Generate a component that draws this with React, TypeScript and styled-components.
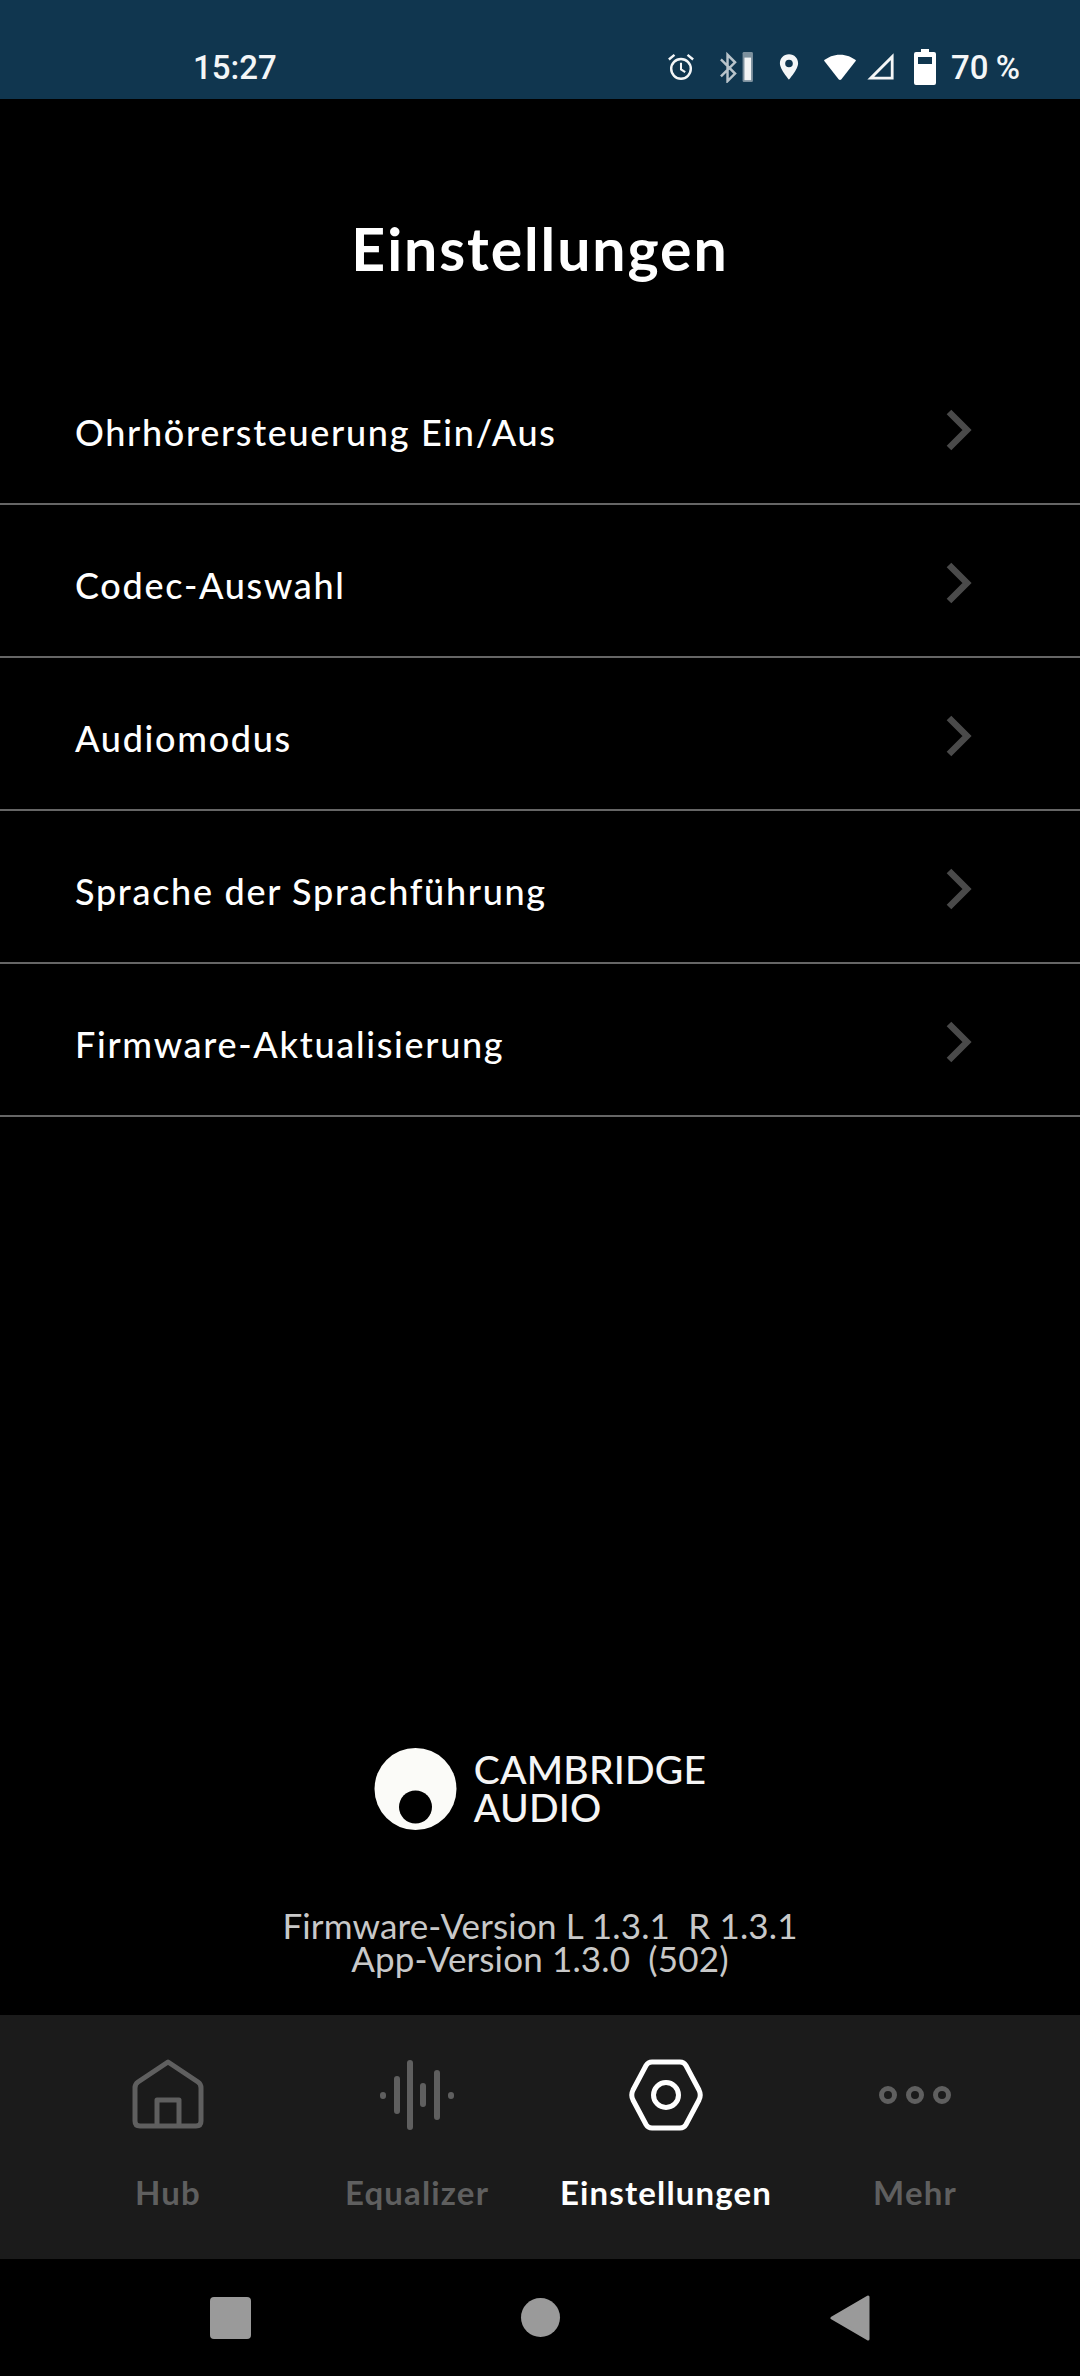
import React from 'react';
import styled, { createGlobalStyle } from 'styled-components';

const GlobalStyle = createGlobalStyle`
  html, body {
    margin: 0;
    padding: 0;
    background: #000;
  }
  * {
    box-sizing: border-box;
  }
`;

const Page = styled.div`
  width: 1080px;
  height: 2376px;
  display: flex;
  flex-direction: column;
  background: #000;
  color: #fff;
  font-family: Lato, 'Open Sans', sans-serif;
  overflow: hidden;
`;

const StatusBar = styled.div`
  height: 99px;
  flex: none;
  background: #10364f;
  display: flex;
  align-items: center;
  padding: 35px 60px 0 193px;
`;

const Clock = styled.span`
  font-family: Roboto, sans-serif;
  font-size: 33px;
  font-weight: 500;
  color: #f4f6f7;
`;

const StatusIcons = styled.div`
  margin-left: auto;
  display: flex;
  align-items: center;
`;

const StatusSlot = styled.span<{ $gap: number }>`
  display: flex;
  margin-left: ${props => props.$gap}px;
`;

const Percent = styled.span`
  font-family: Roboto, sans-serif;
  font-size: 33px;
  font-weight: 500;
  color: #f4f6f7;
  margin-left: 15px;
  word-spacing: -1px;
`;

const Title = styled.h1`
  margin: 0;
  height: 253px;
  flex: none;
  padding-top: 114px;
  text-align: center;
  font-size: 59px;
  line-height: 72px;
  font-weight: 700;
  letter-spacing: 1.9px;
`;

const List = styled.div`
  display: flex;
  flex-direction: column;
`;

const Row = styled.div`
  height: 153px;
  display: flex;
  align-items: center;
  justify-content: space-between;
  padding: 4px 108px 0 75px;
  border-bottom: 2px solid #666;
  font-size: 36px;
  font-weight: 500;
  letter-spacing: 1.7px;
`;

const RowLabel = styled.span`
  padding-top: 4px;
`;

const Brand = styled.div`
  margin-top: auto;
  display: flex;
  align-items: center;
  justify-content: center;
  gap: 17px;
`;

const BrandName = styled.div`
  font-size: 39px;
  line-height: 38px;
  font-weight: 500;
  letter-spacing: 0.2px;
  color: #f5f5f5;
  margin-top: -2px;
`;

const Versions = styled.div`
  margin-top: 79px;
  margin-bottom: 40px;
  text-align: center;
  color: #c8c8c8;
  font-size: 35px;
  line-height: 33px;
  font-weight: 400;
  letter-spacing: 0.15px;
  white-space: pre;
`;

const TabBar = styled.nav`
  height: 244px;
  flex: none;
  background: #1b1b1b;
  display: grid;
  grid-template-columns: repeat(4, 249px);
  justify-content: center;
  padding: 40px 0 0 3px;
`;

const Tab = styled.div<{ $active?: boolean }>`
  display: flex;
  flex-direction: column;
  align-items: center;
  color: ${props => (props.$active ? '#fff' : '#5f5f5f')};
  font-size: 33px;
  line-height: 40px;
  font-weight: 700;
  letter-spacing: 1.15px;
`;

const TabIcon = styled.div`
  height: 80px;
  margin-bottom: 37px;
  display: flex;
  align-items: center;
  justify-content: center;
`;

const NavBar = styled.div`
  height: 117px;
  flex: none;
  display: flex;
  align-items: center;
  justify-content: center;
  gap: 270px;
`;

const NavSquare = styled.div`
  width: 41px;
  height: 42px;
  border-radius: 4px;
  background: #9a9a9a;
`;

const NavCircle = styled.div`
  width: 39px;
  height: 39px;
  border-radius: 50%;
  background: #9a9a9a;
`;

const Chevron = () => (
  <svg width="26" height="42" viewBox="0 0 26 42" fill="none">
    <path d="M3 3 L21 21 L3 39" stroke="#4a4a4a" strokeWidth="6.5" />
  </svg>
);

const AlarmIcon = () => (
  <svg width="28" height="30" viewBox="0 0 30 30" fill="none" stroke="#f4f6f7">
    <circle cx="15" cy="17" r="10.5" strokeWidth="2.6" />
    <path d="M15 10.5 V17.5 L19.5 20.5" strokeWidth="2.2" />
    <path d="M2 7 L8 2 M28 7 L22 2" strokeWidth="2.6" />
  </svg>
);

const BluetoothBatteryIcon = () => (
  <svg width="34" height="32" viewBox="0 0 36 34" fill="none">
    <path
      d="M2 9 L17 24 L9 32 V4 L17 12 L2 27"
      stroke="#b9c4cb"
      strokeWidth="2.6"
    />
    <rect x="25" y="1" width="11" height="32" rx="1.5" fill="#7d919e" />
    <rect x="27" y="7" width="7" height="24" fill="#f2f4f5" />
  </svg>
);

const LocationIcon = () => (
  <svg width="20" height="30" viewBox="0 0 22 30">
    <path
      fillRule="evenodd"
      fill="#f4f6f7"
      d="M11 1 C5 1 1 5.5 1 11 C1 18 11 29 11 29 C11 29 21 18 21 11 C21 5.5 17 1 11 1 Z M11 7 A4.2 4.2 0 1 1 11 15.4 A4.2 4.2 0 1 1 11 7 Z"
    />
  </svg>
);

const WifiIcon = () => (
  <svg width="34" height="30" viewBox="0 0 36 30">
    <path
      fill="#fff"
      d="M18 2 C11 2 5.5 4.5 1 8 L16.5 28 Q18 29.5 19.5 28 L35 8 C30.5 4.5 25 2 18 2 Z"
    />
  </svg>
);

const SignalIcon = () => (
  <svg width="28" height="28" viewBox="0 0 30 30" fill="none">
    <path d="M27 4 V27 H4 Z" stroke="#f4f6f7" strokeWidth="3" />
  </svg>
);

const BatteryIcon = () => (
  <svg width="22" height="36" viewBox="0 0 22 36">
    <path
      fillRule="evenodd"
      fill="#fff"
      d="M7 0 H15 V3 H20 Q22 3 22 5 V34 Q22 36 20 36 H2 Q0 36 0 34 V5 Q0 3 2 3 H7 Z M4 8 V15 H18 V8 Z"
    />
  </svg>
);

const LogoMark = () => (
  <svg width="83" height="82" viewBox="0 0 83 82">
    <circle cx="41.5" cy="41" r="41" fill="#fbfbf8" />
    <circle cx="41.5" cy="59" r="16.5" fill="#000" />
  </svg>
);

const HomeIcon = () => (
  <svg width="72" height="72" viewBox="0 0 72 72" fill="none" stroke="#5f5f5f" strokeWidth="5" strokeLinejoin="round">
    <path d="M36 3 L66 23 Q69 25 69 29 V62 Q69 67 64 67 H8 Q3 67 3 62 V29 Q3 25 6 23 Z" />
    <path d="M25 67 V41 H47 V67" />
  </svg>
);

const EqualizerIcon = () => (
  <svg width="76" height="72" viewBox="0 0 76 72" fill="none" stroke="#5f5f5f" strokeWidth="6" strokeLinecap="round">
    <path d="M4 36 V37 M18 20 V52 M31 4 V68 M44 27 V45 M58 14 V58 M72 36 V37" />
  </svg>
);

const SettingsIcon = () => (
  <svg width="74" height="72" viewBox="0 0 74 72" fill="none" stroke="#fff" strokeWidth="5">
    <path d="M23 3 H51 Q55 3 57 6.5 L70 31 Q72.5 36 70 41 L57 65.5 Q55 69 51 69 H23 Q19 69 17 65.5 L4 41 Q1.5 36 4 31 L17 6.5 Q19 3 23 3 Z" />
    <circle cx="37" cy="36" r="12.5" />
  </svg>
);

const MoreIcon = () => (
  <svg width="74" height="20" viewBox="0 0 74 20" fill="none" stroke="#5f5f5f" strokeWidth="5">
    <circle cx="10" cy="10" r="6.5" />
    <circle cx="37" cy="10" r="6.5" />
    <circle cx="64" cy="10" r="6.5" />
  </svg>
);

const BackIcon = () => (
  <svg width="40" height="46" viewBox="0 0 40 46">
    <path
      fill="#9a9a9a"
      stroke="#9a9a9a"
      strokeWidth="3"
      strokeLinejoin="round"
      d="M38 2 V44 L2 23 Z"
    />
  </svg>
);

const rows = [
  'Ohrhörersteuerung Ein/Aus',
  'Codec-Auswahl',
  'Audiomodus',
  'Sprache der Sprachführung',
  'Firmware-Aktualisierung'
];

const App: React.FC = () => (
  <Page>
    <GlobalStyle />
    <StatusBar>
      <Clock>15:27</Clock>
      <StatusIcons>
        <StatusSlot $gap={0}>
          <AlarmIcon />
        </StatusSlot>
        <StatusSlot $gap={24}>
          <BluetoothBatteryIcon />
        </StatusSlot>
        <StatusSlot $gap={26}>
          <LocationIcon />
        </StatusSlot>
        <StatusSlot $gap={24}>
          <WifiIcon />
        </StatusSlot>
        <StatusSlot $gap={10}>
          <SignalIcon />
        </StatusSlot>
        <StatusSlot $gap={19}>
          <BatteryIcon />
        </StatusSlot>
        <Percent>70 %</Percent>
      </StatusIcons>
    </StatusBar>
    <Title>Einstellungen</Title>
    <List>
      {rows.map(label => (
        <Row key={label}>
          <RowLabel>{label}</RowLabel>
          <Chevron />
        </Row>
      ))}
    </List>
    <Brand>
      <LogoMark />
      <BrandName>
        CAMBRIDGE
        <br />
        AUDIO
      </BrandName>
    </Brand>
    <Versions>
      {'Firmware-Version L 1.3.1  R 1.3.1\nApp-Version 1.3.0  (502)'}
    </Versions>
    <TabBar>
      <Tab>
        <TabIcon>
          <HomeIcon />
        </TabIcon>
        Hub
      </Tab>
      <Tab>
        <TabIcon>
          <EqualizerIcon />
        </TabIcon>
        Equalizer
      </Tab>
      <Tab $active>
        <TabIcon>
          <SettingsIcon />
        </TabIcon>
        Einstellungen
      </Tab>
      <Tab>
        <TabIcon>
          <MoreIcon />
        </TabIcon>
        Mehr
      </Tab>
    </TabBar>
    <NavBar>
      <NavSquare />
      <NavCircle />
      <BackIcon />
    </NavBar>
  </Page>
);

export default App;
